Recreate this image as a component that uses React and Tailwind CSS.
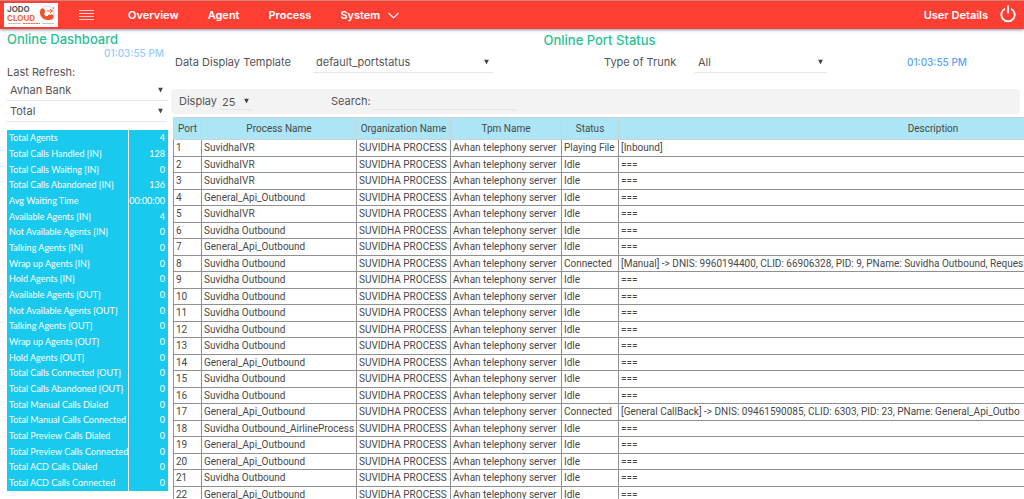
import React from 'react';

const agentStats = [
  ['Total Agents', '4'],
  ['Total Calls Handled {IN}', '128'],
  ['Total Calls Waiting {IN}', '0'],
  ['Total Calls Abandoned {IN}', '136'],
  ['Avg Waiting Time', '00:00:00'],
  ['Available Agents {IN}', '4'],
  ['Not Available Agents {IN}', '0'],
  ['Talking Agents {IN}', '0'],
  ['Wrap up Agents {IN}', '0'],
  ['Hold Agents {IN}', '0'],
  ['Available Agents {OUT}', '0'],
  ['Not Available Agents {OUT}', '0'],
  ['Talking Agents {OUT}', '0'],
  ['Wrap up Agents {OUT}', '0'],
  ['Hold Agents {OUT}', '0'],
  ['Total Calls Connected {OUT}', '0'],
  ['Total Calls Abandoned {OUT}', '0'],
  ['Total Manual Calls Dialed', '0'],
  ['Total Manual Calls Connected', '0'],
  ['Total Preview Calls Dialed', '0'],
  ['Total Preview Calls Connected', '0'],
  ['Total ACD Calls Dialed', '0'],
  ['Total ACD Calls Connected', '0'],
];

const IVR = 'SuvidhaIVR';
const OUTBOUND = 'Suvidha Outbound';
const API = 'General_Api_Outbound';

const ports = [
  { process: IVR, status: 'Playing File', description: '[Inbound]' },
  { process: IVR },
  { process: IVR },
  { process: API },
  { process: IVR },
  { process: OUTBOUND },
  { process: API },
  {
    process: OUTBOUND,
    status: 'Connected',
    description: '[Manual] -> DNIS: 9960194400, CLID: 66906328, PID: 9, PName: Suvidha Outbound, Reques',
  },
  { process: OUTBOUND },
  { process: OUTBOUND },
  { process: OUTBOUND },
  { process: OUTBOUND },
  { process: OUTBOUND },
  { process: API },
  { process: OUTBOUND },
  { process: OUTBOUND },
  {
    process: API,
    status: 'Connected',
    description: '[General CallBack] -> DNIS: 09461590085, CLID: 6303, PID: 23, PName: General_Api_Outbo',
  },
  { process: 'Suvidha Outbound_AirlineProcess' },
  { process: API },
  { process: API },
  { process: OUTBOUND },
  { process: API },
];

function Logo() {
  return (
    <svg width="54" height="24" viewBox="0 0 54 24" role="img" aria-label="Jodo Cloud">
      <rect width="54" height="24" fill="#fff" />
      <text x="3" y="9" fontFamily="Inter, sans-serif" fontSize="8" fontWeight="700" fill="#555">JODO</text>
      <text x="3" y="18" fontFamily="Inter, sans-serif" fontSize="8" fontWeight="700" fill="#f4643a">CLOUD</text>
      <circle cx="43" cy="10" r="7" fill="none" stroke="#d8d8d8" strokeWidth="1" />
      <path
        d="M36.500 7c1-2 3.500-1.800 4.200 0l.3 2.200c0 .9-1 1.100-.9 1.700.4 1.200 1.500 2.100 2.800 2.400.8 0 1.200-1.200 2-1.500l3.700-.2c1.800.7 1.600 3-.1 4.300-2.300 1.700-6.800 1.500-9.500-.6-2.500-2-3.800-5.600-2.500-8.300z"
        fill="#f2512a"
      />
      <path d="M43 8h5M46 6l2.500 2-2.500 2" fill="none" stroke="#f2512a" strokeWidth="1" />
      <circle cx="49.500" cy="5" r="0.800" fill="#f2512a" />
      <path d="M4 20.500h13M38 20.500h12" stroke="#b5b5b5" strokeWidth="0.800" />
      <path d="M19 20.500h17" stroke="#f4643a" strokeWidth="1" strokeDasharray="2 0.600" />
    </svg>
  );
}

function Select({ id, label, value, className }) {
  return (
    <div className={`relative border-b border-gray-200 ${className}`}>
      <select id={id} aria-label={label} defaultValue={value} className="block w-full h-full appearance-none bg-transparent pl-[3px] outline-none">
        <option>{value}</option>
      </select>
      <svg className="absolute top-1/2 right-1 -translate-y-1/2 pointer-events-none" width="5" height="5" viewBox="0 0 5 5">
        <path d="M0 0h5L2.500 5z" fill="#444" />
      </svg>
    </div>
  );
}

function Header() {
  return (
    <header className="flex items-center h-[29px] shrink-0 pl-1 pr-2 bg-[#ff3f34] border-t border-[#d08078] shadow-sm shadow-gray-400 text-white text-[11px] font-semibold">
      <a href="#home"><Logo /></a>
      <button aria-label="Toggle menu" className="ml-[21px]">
        <svg width="15" height="12" viewBox="0 0 15 12">
          <path d="M0 1.500h15M0 4.500h15M0 7.500h15M0 10.500h15" stroke="#ffd0cc" strokeWidth="1" />
        </svg>
      </button>
      <nav className="flex items-center gap-[29px] ml-[34px]">
        <a href="#overview">Overview</a>
        <a href="#agent">Agent</a>
        <a href="#process">Process</a>
        <a href="#system" className="flex items-center gap-2">
          System
          <svg width="11" height="7" viewBox="0 0 11 7">
            <path d="M0.500 0.800l5 5 5-5" fill="none" stroke="#fff" strokeWidth="1.200" />
          </svg>
        </a>
      </nav>
      <a href="#user" className="ml-auto">User Details</a>
      <button aria-label="Log out" className="ml-3">
        <svg width="16" height="20" viewBox="0 0 16 20">
          <path d="M5 3.700a6.700 6.700 0 1 0 6 0M8 0.500v8" fill="none" stroke="#fff" strokeWidth="1.800" />
        </svg>
      </button>
    </header>
  );
}

function Sidebar() {
  return (
    <aside className="w-[160px] shrink-0">
      <h2 className="pt-[2px] text-[13px] leading-4 font-medium text-[#2bbf95]">Online Dashboard</h2>
      <div className="pr-[3px] text-right text-[10px] leading-3 font-medium text-[#99ccff]">01:03:55 PM</div>
      <div className="mt-[5px] text-[11px] leading-4">Last Refresh:</div>
      <Select label="Client" value="Avhan Bank" className="h-[21px] text-[11px]" />
      <Select label="Period" value="Total" className="h-[21px] text-[11px]" />
      <table className="w-full mt-2 bg-[#19c9ee] text-white font-['Lato',sans-serif] text-[9px] leading-3">
        <tbody>
          {agentStats.map(([name, value]) => (
            <tr key={name} className="h-4 nth-[3n]:h-[15px]">
              <th scope="row" className="p-0 pl-[2px] text-left font-normal whitespace-nowrap border-r border-white">{name}</th>
              <td className="p-0 pr-[3px] text-right">{value}</td>
            </tr>
          ))}
        </tbody>
      </table>
    </aside>
  );
}

function PortTable() {
  return (
    <div className="mt-[3px] ml-[2px] overflow-hidden">
      <table className="table-fixed w-[1075px] border-collapse font-['Roboto',sans-serif] text-[10px] leading-[14px] text-[#484848]">
        <colgroup>
          <col className="w-[28px]" />
          <col className="w-[155px]" />
          <col className="w-[94px]" />
          <col className="w-[111px]" />
          <col className="w-[57px]" />
          <col />
        </colgroup>
        <thead className="bg-[#ace6f6]">
          <tr className="h-[22px]">
            {['Port', 'Process Name', 'Organization Name', 'Tpm Name', 'Status', 'Description'].map((title) => (
              <th key={title} scope="col" className="p-0 font-normal whitespace-nowrap border border-[#c9d3d6]">{title}</th>
            ))}
          </tr>
        </thead>
        <tbody>
          {ports.map((port, index) => (
            <tr key={index} className="h-[17px] even:h-4 *:border *:border-[#909090] *:p-0 *:pl-[2px] *:whitespace-nowrap">
              <td>{index + 1}</td>
              <td>{port.process}</td>
              <td>SUVIDHA PROCESS</td>
              <td>Avhan telephony server</td>
              <td>{port.status || 'Idle'}</td>
              <td>{port.description || '==='}</td>
            </tr>
          ))}
        </tbody>
      </table>
    </div>
  );
}

function App() {
  return (
    <div className="flex flex-col h-screen overflow-hidden bg-white font-['Inter',sans-serif] text-[#555]">
      <Header />
      <div className="flex gap-1 pl-[7px]">
        <Sidebar />
        <main className="flex-1 min-w-0">
          <h2 className="pt-[3px] pl-1 text-center text-[13px] leading-4 font-medium text-[#2bbf95]">Online Port Status</h2>
          <div className="flex items-center mt-1 pl-1 text-[11px]">
            <label htmlFor="template" className="w-[138px]">Data Display Template</label>
            <Select id="template" value="default_portstatus" className="w-[180px] h-[21px]" />
            <label htmlFor="trunk" className="w-[91px] ml-[111px]">Type of Trunk</label>
            <Select id="trunk" value="All" className="w-[132px] h-[21px]" />
            <time className="ml-20 text-[10px] font-medium text-[#5aa5f5]">01:03:55 PM</time>
          </div>
          <div className="flex items-center h-[25px] mt-4 mr-1 pl-2 rounded-sm bg-[#f3f3f3] text-[11px]">
            <label htmlFor="display" className="w-10">Display</label>
            <Select id="display" value="25" className="w-[34px] h-4" />
            <label htmlFor="search" className="w-[41px] ml-[78px]">Search:</label>
            <input id="search" type="text" className="w-[144px] h-4 bg-transparent border-b border-gray-200 outline-none" />
          </div>
          <PortTable />
        </main>
      </div>
    </div>
  );
}

export default App;
